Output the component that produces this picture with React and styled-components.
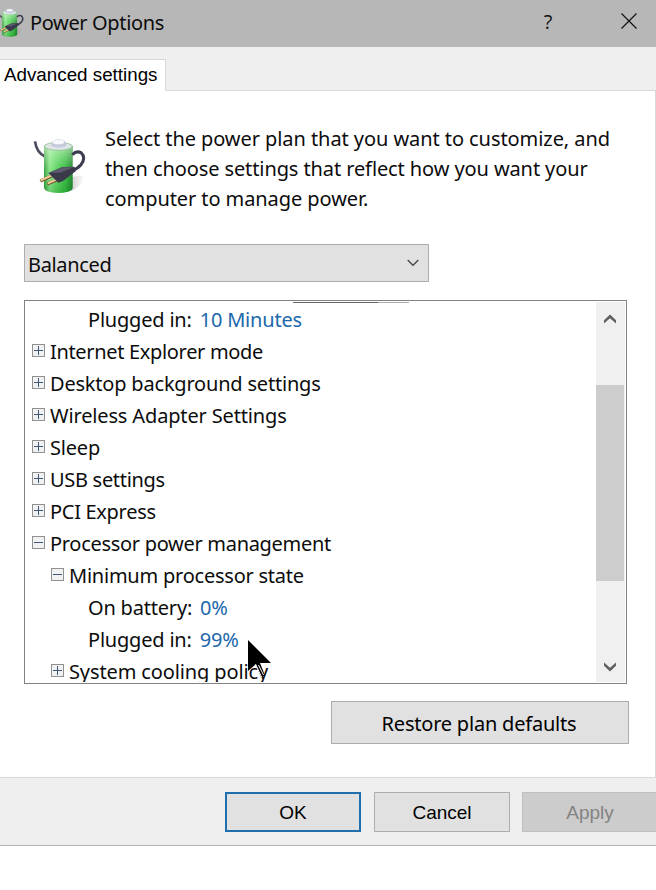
import React from "react";
import styled, { createGlobalStyle } from "styled-components";

const GlobalStyle = createGlobalStyle`
  * {
    box-sizing: border-box;
  }
  body {
    margin: 0;
    background: #fff;
    color: #0c0c0c;
    font-family: "Noto Sans", "Open Sans", sans-serif;
    font-size: 20px;
    overflow: hidden;
  }
`;

const Window = styled.div`
  width: 656px;
  height: 846px;
  display: flex;
  flex-direction: column;
  background: #efefef;
  border-bottom: 1px solid #b4b4b4;
  overflow: hidden;
`;

const TitleBar = styled.header`
  height: 47px;
  flex: none;
  display: flex;
  align-items: center;
  background: #b7b7b7;
  padding-bottom: 3px;
`;

const TitleIcon = styled.span`
  display: flex;
  margin: 0 6px 0 -4px;
`;

const Text = styled.span`
  white-space: nowrap;
  letter-spacing: ${(props) => props.$tracking || 0}px;
`;

const Caption = styled(Text)`
  flex: 1;
`;

const CaptionButton = styled.button`
  width: ${(props) => props.$width}px;
  height: 44px;
  display: flex;
  align-items: center;
  justify-content: center;
  padding: 0 0 2px;
  border: 0;
  background: none;
  color: #111;
  font: 20px "Open Sans", sans-serif;
`;

const TabStrip = styled.nav`
  height: 43px;
  flex: none;
  display: flex;
  align-items: flex-end;
`;

const Tab = styled.div`
  width: 166px;
  height: 32px;
  margin-bottom: -1px;
  padding: 4px 0 0 4px;
  background: #fff;
  border: 1px solid #d9d9d9;
  border-width: 1px 1px 0 0;
  font: 18.8px/21px "Liberation Sans", Arial, sans-serif;
  color: #000;
  z-index: 1;
`;

const Panel = styled.main`
  height: 688px;
  flex: none;
  display: flex;
  flex-direction: column;
  align-items: flex-start;
  padding: 33px 0 0 24px;
  background: #fff;
  border: 1px solid #d9d9d9;
  border-left: 0;
`;

const Intro = styled.div`
  display: flex;
  align-items: flex-start;
  height: 120px;
  padding-left: 8px;
`;

const PlanIcon = styled.span`
  display: flex;
  margin: 12px 19px 0 0;
`;

const Description = styled.p`
  display: flex;
  flex-direction: column;
  margin: 0;
  line-height: 30px;
`;

const Select = styled.div`
  width: 405px;
  height: 38px;
  display: flex;
  align-items: center;
  justify-content: space-between;
  padding: 3px 9px 0 3px;
  background: #e1e1e1;
  border: 1px solid #adadad;

  svg {
    margin-bottom: 4px;
  }
`;

const Tree = styled.div`
  width: 603px;
  height: 384px;
  display: flex;
  margin-top: 18px;
  padding: 1px;
  border: 1px solid #828282;
  position: relative;
`;

const Rows = styled.div`
  flex: 1;
  height: 380px;
  overflow: hidden;
  padding-top: 1px;
`;

const Row = styled.div`
  height: 32px;
  display: flex;
  align-items: center;
  padding-left: ${(props) => (props.$level === 3 ? 62 : 6 + props.$level * 19)}px;
`;

const Value = styled(Text)`
  color: #2068ac;
  margin-left: 8px;
`;

const Toggle = styled.svg`
  flex: none;
  margin: 0 4px 1px 0;
`;

const Clipped = styled.span`
  width: 116px;
  height: 1px;
  position: absolute;
  left: 268px;
  top: 1px;
  background: linear-gradient(to right, #666 85px, #adadad 85px);
`;

const ScrollBar = styled.div`
  width: 29px;
  height: 380px;
  display: flex;
  flex-direction: column;
  background: #f0f0f0;
`;

const ScrollArrow = styled.span`
  height: ${(props) => props.$height}px;
  display: flex;
  align-items: center;
  justify-content: center;
  padding-right: 1px;
`;

const Thumb = styled.span`
  width: 28px;
  height: 196px;
  margin: 50px 0 71px;
  background: #cdcdcd;
`;

const Pointer = styled.svg`
  position: absolute;
  left: 222px;
  top: 338px;
`;

const Button = styled.button`
  width: ${(props) => props.$width || 136}px;
  height: 40px;
  flex: none;
  padding: 2px 0 0;
  background: ${(props) => (props.disabled ? "#cccccc" : "#e1e1e1")};
  border: ${(props) => (props.$primary ? "2px solid #1f6fae" : "1px solid #adadad")};
  border-color: ${(props) => props.disabled && "#bfbfbf"};
  color: ${(props) => (props.disabled ? "#838383" : "#000")};
  font: 19px "Liberation Sans", Arial, sans-serif;

  &:disabled {
    margin-left: -1px;
  }
`;

const RestoreButton = styled(Button)`
  height: 43px;
  margin: 17px 0 0 307px;
  padding: 2px 2px 0 0;
  font: 20px "Noto Sans", sans-serif;
`;

const Footer = styled.footer`
  display: flex;
  gap: 13px;
  padding: 14px 0 0 225px;
`;

function BatteryIcon({ id, width, height }) {
  return (
    <svg width={width} height={height} viewBox="36 48 162 177">
      <defs>
        <linearGradient id={`${id}-body`}>
          <stop offset="0" stopColor="#2c9a35" />
          <stop offset="0.2" stopColor="#8be58a" />
          <stop offset="0.4" stopColor="#5fd562" />
          <stop offset="0.75" stopColor="#2fb53a" />
          <stop offset="1" stopColor="#147a22" />
        </linearGradient>
        <linearGradient id={`${id}-shine`} x2="0" y2="1">
          <stop offset="0" stopColor="#e9ffe5" stopOpacity="0.6" />
          <stop offset="0.5" stopColor="#b9f5b5" stopOpacity="0.1" />
          <stop offset="1" stopColor="#0b7a1c" stopOpacity="0.25" />
        </linearGradient>
        <linearGradient id={`${id}-shadow`}>
          <stop offset="0" stopColor="#777" stopOpacity="0.7" />
          <stop offset="1" stopColor="#999" stopOpacity="0.05" />
        </linearGradient>
      </defs>
      <path d="M150 172L186 166Q200 182 160 211L120 219Z" fill={`url(#${id}-shadow)`} />
      <path d="M45 64Q50 99 76 110" fill="none" stroke="#4a4a5e" strokeWidth="8" />
      <path d="M72 80Q72 70 115 69Q158 70 158 80V204Q156 218 115 219Q74 218 72 204Z" fill={`url(#${id}-body)`} />
      <path d="M72 80V204Q74 218 115 219Q156 218 158 204V80Z" fill={`url(#${id}-shine)`} />
      <ellipse cx="115" cy="79" rx="42" ry="12" fill="#dfe5e6" stroke="#7fb884" strokeWidth="2" />
      <path d="M94 70Q95 59 116 58Q137 59 138 71V78Q116 87 94 78Z" fill="#c5cbdc" />
      <ellipse cx="115" cy="66" rx="18" ry="7" fill="#f7f8fb" />
      <path d="M157 104Q169 91 183 98Q199 113 183 134Q173 146 156 151" fill="none" stroke="#3c3c50" strokeWidth="9" />
      <path d="M61 183L95 168M82 192L116 177" stroke="#7b5a31" strokeWidth="10" />
      <path d="M62 181L95 166M83 190L116 175" stroke="#f0d09b" strokeWidth="6" />
      <path d="M85 159L127 141L163 140L168 153L129 183L115 188Z" fill="#39394a" />
      <path d="M87 158L128 142L162 142L120 158Z" fill="#5c5c6e" />
    </svg>
  );
}

function ToggleBox({ open }) {
  return (
    <Toggle width="14" height="14" viewBox="0 0 14 14" shapeRendering="crispEdges">
      <rect x="0.5" y="0.5" width="12" height="12" fill="#f1f1f1" stroke="#919191" />
      <path d={open ? "M2 6.5H11" : "M2 6.5H11M6.5 2V11"} stroke="#40577f" />
    </Toggle>
  );
}

const rows = [
  { level: 3, label: "Plugged in:", tracking: -0.2, value: "10 Minutes" },
  { level: 0, label: "Internet Explorer mode", tracking: -0.33, open: false },
  { level: 0, label: "Desktop background settings", tracking: -0.2, open: false },
  { level: 0, label: "Wireless Adapter Settings", tracking: -0.15, open: false },
  { level: 0, label: "Sleep", tracking: -0.2, open: false },
  { level: 0, label: "USB settings", tracking: -0.3, open: false },
  { level: 0, label: "PCI Express", tracking: -0.3, open: false },
  { level: 0, label: "Processor power management", tracking: -0.3, open: true },
  { level: 1, label: "Minimum processor state", tracking: -0.23, open: true },
  { level: 3, label: "On battery:", tracking: -0.2, value: "0%" },
  { level: 3, label: "Plugged in:", tracking: -0.2, value: "99%" },
  { level: 1, label: "System cooling policy", tracking: -0.12, open: false },
];

function App() {
  return (
    <>
      <GlobalStyle />
      <Window>
        <TitleBar>
          <TitleIcon>
            <BatteryIcon id="small" width={28} height={31} />
          </TitleIcon>
          <Caption $tracking={-0.36}>Power Options</Caption>
          <CaptionButton $width={106}>?</CaptionButton>
          <CaptionButton $width={55}>
            <svg width="16" height="16" viewBox="0 0 16 16">
              <path d="M0.5 0.5L15.5 15.5M15.5 0.5L0.5 15.5" stroke="#111" strokeWidth="1.2" />
            </svg>
          </CaptionButton>
        </TitleBar>
        <TabStrip>
          <Tab>Advanced settings</Tab>
        </TabStrip>
        <Panel>
          <Intro>
            <PlanIcon>
              <BatteryIcon id="large" width={54} height={59} />
            </PlanIcon>
            <Description>
              <Text $tracking={-0.07}>Select the power plan that you want to customize, and</Text>
              <Text $tracking={-0.1}>then choose settings that reflect how you want your</Text>
              <Text $tracking={-0.08}>computer to manage power.</Text>
            </Description>
          </Intro>
          <Select>
            <Text $tracking={-0.35}>Balanced</Text>
            <svg width="12" height="8" viewBox="0 0 12 8">
              <path d="M0.7 1L6 6.3L11.3 1" fill="none" stroke="#444" strokeWidth="1.3" />
            </svg>
          </Select>
          <Tree>
            <Rows>
              {rows.map((row, i) => (
                <Row key={i} $level={row.level}>
                  {row.open !== undefined && <ToggleBox open={row.open} />}
                  <Text $tracking={row.tracking}>{row.label}</Text>
                  {row.value && <Value $tracking={-0.2}>{row.value}</Value>}
                </Row>
              ))}
            </Rows>
            <ScrollBar>
              <ScrollArrow $height={33}>
                <svg width="12" height="10" viewBox="0 0 12 10">
                  <path d="M0 6.2L6 0.5L12 6.2V9.5L6 4.2L0 9.5Z" fill="#606060" />
                </svg>
              </ScrollArrow>
              <Thumb />
              <ScrollArrow $height={30}>
                <svg width="12" height="10" viewBox="0 0 12 10">
                  <path d="M0 3.8L6 9.5L12 3.8V0.5L6 5.8L0 0.5Z" fill="#606060" />
                </svg>
              </ScrollArrow>
            </ScrollBar>
            <Clipped />
            <Pointer width="26" height="40" viewBox="0 0 26 40">
              <path d="M1 1V32L8.5 25.5L14 38L18 36.5L13 24H24Z" fill="#000" />
              <path d="M8.5 25L14.5 38M11.5 26L16.5 36" stroke="#fff" strokeWidth="1" />
            </Pointer>
          </Tree>
          <RestoreButton $width={298}>
            <Text $tracking={-0.21}>Restore plan defaults</Text>
          </RestoreButton>
        </Panel>
        <Footer>
          <Button $primary>OK</Button>
          <Button>Cancel</Button>
          <Button disabled>Apply</Button>
        </Footer>
      </Window>
    </>
  );
}

export default App;
